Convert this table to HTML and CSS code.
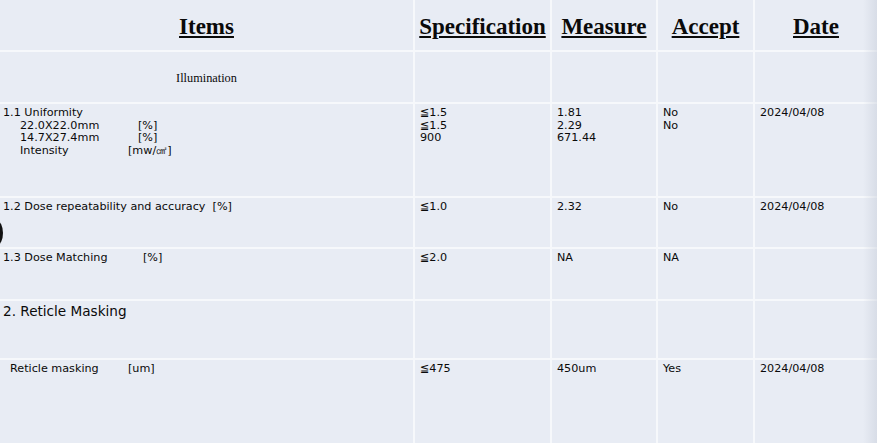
FILE: index.html
```html
<!DOCTYPE html>
<html>
<head>
<meta charset="utf-8">
<link rel="stylesheet" href="styles.css">
</head>
<body>
<div class="page">
  <div class="table">
    <div class="cell head"><span>Items</span></div>
    <div class="cell head"><span>Specification</span></div>
    <div class="cell head"><span>Measure</span></div>
    <div class="cell head"><span>Accept</span></div>
    <div class="cell head"><span>Date</span></div>

    <div class="cell section">Illumination</div>
    <div class="cell"></div>
    <div class="cell"></div>
    <div class="cell"></div>
    <div class="cell"></div>

    <div class="cell item">
      <div>1.1 Uniformity</div>
      <div class="sub"><span class="lbl">22.0X22.0mm</span><span>[%]</span></div>
      <div class="sub"><span class="lbl">14.7X27.4mm</span><span>[%]</span></div>
      <div class="sub"><span class="lbl lbl-i">Intensity</span><span>[mw/㎠]</span></div>
    </div>
    <div class="cell val"><div>≦1.5</div><div>≦1.5</div><div>900</div></div>
    <div class="cell val"><div>1.81</div><div>2.29</div><div>671.44</div></div>
    <div class="cell val"><div>No</div><div>No</div></div>
    <div class="cell val"><div>2024/04/08</div></div>

    <div class="cell item"><div>1.2 Dose repeatability and accuracy&nbsp;&nbsp;[%]</div></div>
    <div class="cell val">≦1.0</div>
    <div class="cell val">2.32</div>
    <div class="cell val">No</div>
    <div class="cell val">2024/04/08</div>

    <div class="cell item"><div class="sub flat"><span class="lbl lbl-m">1.3 Dose Matching</span><span>[%]</span></div></div>
    <div class="cell val">≦2.0</div>
    <div class="cell val">NA</div>
    <div class="cell val">NA</div>
    <div class="cell val"></div>

    <div class="cell item big">2. Reticle Masking</div>
    <div class="cell"></div>
    <div class="cell"></div>
    <div class="cell"></div>
    <div class="cell"></div>

    <div class="cell item"><div class="sub rm"><span class="lbl lbl-r">Reticle masking</span><span>[um]</span></div></div>
    <div class="cell val">≦475</div>
    <div class="cell val">450um</div>
    <div class="cell val">Yes</div>
    <div class="cell val">2024/04/08</div>
  </div>
  <div class="arc"></div>
  <div class="edge"></div>
</div>
</body>
</html>
```
FILE: styles.css
```css
html, body {
  margin: 0;
  padding: 0;
  background: #f6f8fb;
}
.page {
  position: relative;
  width: 877px;
  height: 443px;
  overflow: hidden;
}
.table {
  display: grid;
  grid-template-columns: 413px 135px 104px 95px 1fr;
  grid-template-rows: 50px 50px 92px 49px 50px 57px 90px;
  column-gap: 2px;
  row-gap: 2px;
  background: #f6f8fb;
  width: 877px;
}
.cell {
  background: #e8ecf4;
  color: #0a0a0a;
  font-family: "DejaVu Sans", Tahoma, sans-serif;
  font-size: 11.2px;
  line-height: 12.7px;
}
.head {
  display: flex;
  align-items: center;
  justify-content: center;
  font-family: "Liberation Serif", "Times New Roman", serif;
  font-weight: bold;
  font-size: 23px;
  line-height: 26px;
  padding-top: 4px;
}
.head span {
  text-decoration: underline;
  text-decoration-thickness: 1.5px;
  text-underline-offset: 2px;
}
.section {
  display: flex;
  align-items: center;
  justify-content: center;
  font-family: "Liberation Serif", "Times New Roman", serif;
  font-size: 12.3px;
  padding-top: 2px;
}
.item {
  padding: 3px 0 0 3px;
}
.val {
  padding: 3px 0 0 5px;
}
.sub {
  display: flex;
  padding-left: 17px;
}
.sub.flat {
  padding-left: 0;
}
.sub.rm {
  padding-left: 7px;
}
.lbl {
  width: 118px;
}
.lbl-i {
  width: 108px;
}
.lbl-m {
  width: 140px;
}
.lbl-r {
  width: 118px;
}
.big {
  font-size: 13.6px;
  line-height: 16px;
  padding-top: 2px;
}
.arc {
  position: absolute;
  left: -9px;
  top: 221px;
  width: 12px;
  height: 24px;
  border-radius: 50%;
  background: #111;
}
.edge {
  position: absolute;
  right: 0;
  top: 0;
  width: 14px;
  height: 443px;
  background: linear-gradient(to right, rgba(200,206,218,0), rgba(200,206,218,0.5));
}
```
